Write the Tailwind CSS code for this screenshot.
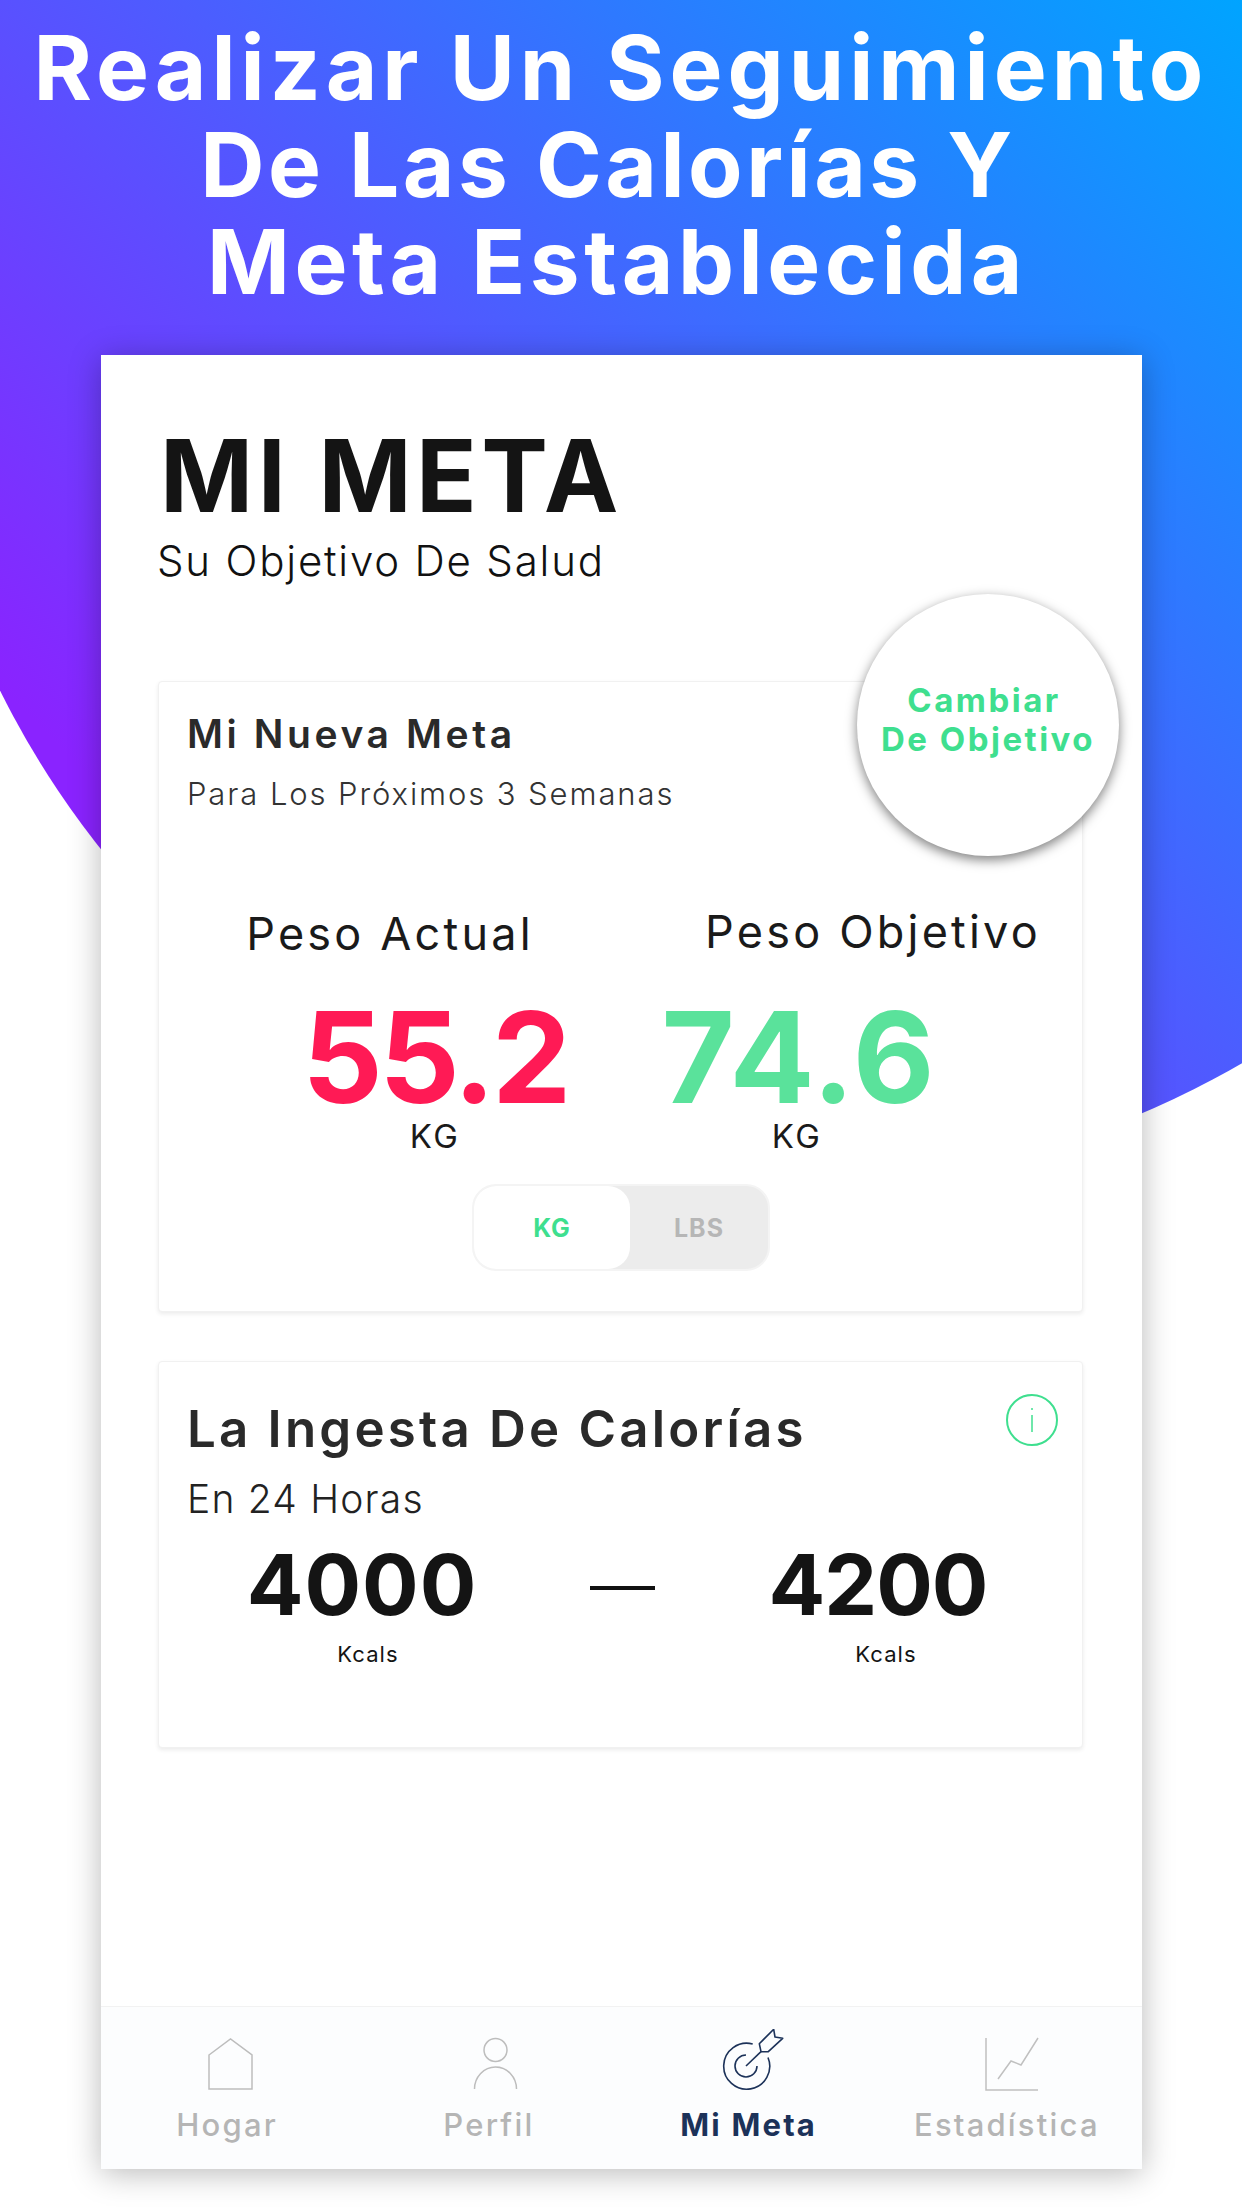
<!DOCTYPE html>
<html lang="es">
<head>
    <meta charset="UTF-8">
    <meta name="viewport" content="width=device-width, initial-scale=1.0">
    <title>Mi Meta</title>
    <script src="https://cdn.jsdelivr.net/npm/@tailwindcss/browser@4"></script>
</head>
<body class="bg-white font-['Inter',sans-serif]">
    <div class="relative w-[1242px] h-[2208px] overflow-hidden bg-white">
        <!-- Gradient disc behind the header and card -->
        <div class="absolute left-0 top-0 w-[1242px] h-[1200px] bg-[linear-gradient(225deg,#00a4ff_0%,#8a23ff_79%)] [clip-path:circle(887px_at_795px_297px)]"></div>

        <div class="relative flex flex-col h-full">
            <header class="h-[355px] pt-[19px] text-center text-white text-[89px] leading-[97px] font-bold">
                <h1 class="tracking-[5px]">Realizar Un Seguimiento</h1>
                <p class="pr-[26px] tracking-[3.5px]">De Las Calorías Y</p>
                <p class="pr-[8px] tracking-[4.5px]">Meta Establecida</p>
            </header>

            <main class="flex flex-col w-[1041px] h-[1814px] ml-[101px] bg-white shadow-[0_4px_30px_rgba(0,0,0,0.28)]">
                <div class="pt-[71px] pl-[57px] pr-[59px]">
                    <h2 class="ml-[2px] text-[100px] leading-[100px] font-bold text-[#141414] tracking-[4.5px]">MI META</h2>
                    <p class="mt-[10px] -ml-[1px] text-[42px] leading-[50px] font-light text-[#111] tracking-[1.8px]">Su Objetivo De Salud</p>

                    <!-- Goal card -->
                    <section class="relative mt-[95px] h-[631px] pt-[29px] pl-[28px] bg-white border border-[#f1f1f1] rounded-[4px] shadow-[0_2px_4px_rgba(0,0,0,0.08)]">
                        <h3 class="text-[39px] leading-[46px] font-semibold text-[#2a2a2a] tracking-[3.6px]">Mi Nueva Meta</h3>
                        <p class="mt-[18px] text-[31px] leading-[38px] font-light text-[#333] tracking-[1.9px]">Para Los Próximos 3 Semanas</p>

                        <button class="absolute -top-[88px] -right-[37px] z-10 flex flex-col items-center justify-center w-[262px] h-[262px] pb-[10px] rounded-full bg-white shadow-[0_4px_12px_rgba(0,0,0,0.5)] text-[33px] leading-[39px] font-bold text-[#3fdf8f] tracking-[2.5px]">
                            <span class="pr-[8px]">Cambiar</span>
                            <span>De Objetivo</span>
                        </button>

                        <div class="flex items-start mt-[94px] text-[45px] leading-[54px] text-[#1a1a1a] text-center tracking-[3.2px] whitespace-nowrap">
                            <p class="ml-[33px] w-[340px]">Peso Actual</p>
                            <p class="ml-[143px] w-[340px] -mt-[2px]">Peso Objetivo</p>
                        </div>

                        <div class="flex mt-[37px] text-center">
                            <div class="ml-[88px] w-[320px]">
                                <p class="text-[126px] leading-[118px] font-bold text-[#ff1a55] tracking-[-3.5px]">55.2</p>
                                <p class="text-[33px] leading-[40px] text-[#1a1a1a] tracking-[2.5px]">KG</p>
                            </div>
                            <div class="ml-[44px] w-[320px]">
                                <p class="text-[126px] leading-[118px] font-bold text-[#5ae29b] tracking-[2px]">74.6</p>
                                <p class="pr-[4px] text-[33px] leading-[40px] text-[#1a1a1a] tracking-[2.5px]">KG</p>
                            </div>
                        </div>

                        <div class="flex mt-[28px] ml-[285px] w-[298px] h-[87px] border-2 border-[#f4f4f4] rounded-[24px] bg-[#ececec] text-[25px] font-bold tracking-[1px]">
                            <div class="flex items-center justify-center w-[156px] h-full pt-[2px] rounded-[22px] bg-white text-[#3fdf8f]">KG</div>
                            <div class="flex items-center justify-center flex-1 pt-[2px] text-[#b6b6b6]">LBS</div>
                        </div>
                    </section>

                    <!-- Calorie intake card -->
                    <section class="relative mt-[49px] h-[387px] pt-[37px] pl-[28px] bg-white border border-[#f1f1f1] rounded-[4px] shadow-[0_2px_4px_rgba(0,0,0,0.08)]">
                        <svg class="absolute top-[32px] right-[24px]" width="52" height="52" viewBox="0 0 52 52" fill="none" stroke="#3fdf8f">
                            <circle cx="26" cy="26" r="25" stroke-width="2"/>
                            <path d="M26 21v17" stroke-width="1.5"/>
                            <path d="M26 14v2" stroke-width="1.5"/>
                        </svg>
                        <h3 class="text-[51px] leading-[60px] font-semibold text-[#2a2a2a] tracking-[3.2px]">La Ingesta De Calorías</h3>
                        <p class="mt-[17px] text-[39px] leading-[46px] font-light text-[#222] tracking-[1.2px]">En 24 Horas</p>
                        <div class="flex items-start mt-[18px] text-center text-[#141414]">
                            <div class="ml-[25px] w-[300px]">
                                <p class="text-[84px] leading-[90px] font-bold tracking-[1px]">4000</p>
                                <p class="mt-[10px] pl-[12px] text-[22px] leading-[28px] tracking-[1.1px]">Kcals</p>
                            </div>
                            <div class="ml-[78px] mt-[46px] w-[65px] h-[4px] bg-[#111]"></div>
                            <div class="ml-[73px] w-[300px]">
                                <p class="text-[84px] leading-[90px] font-bold tracking-[-1px]">4200</p>
                                <p class="mt-[10px] pl-[16px] text-[22px] leading-[28px] tracking-[1.1px]">Kcals</p>
                            </div>
                        </div>
                    </section>
                </div>

                <!-- Bottom tab bar -->
                <nav class="grid grid-cols-4 mt-auto h-[163px] pt-[22px] bg-[#fcfdfe] border-t border-[#f2f2f2] text-[31px] leading-[38px] text-center text-[#b5b5b5] tracking-[2.2px]">
                    <a class="flex flex-col items-center">
                        <svg width="80" height="64" viewBox="0 0 80 64" fill="none" stroke="#bdbdbd" stroke-width="1.5">
                            <path d="M18 26 39.5 10 61 26V60H18Z"/>
                        </svg>
                        <span class="mt-[13px] pr-[8px] font-medium">Hogar</span>
                    </a>
                    <a class="flex flex-col items-center">
                        <svg width="80" height="64" viewBox="0 0 80 64" fill="none" stroke="#bdbdbd" stroke-width="1.5">
                            <circle cx="44.5" cy="21" r="11.5"/>
                            <path d="M23.5 60a21 22 0 0 1 42 0"/>
                        </svg>
                        <span class="mt-[13px] pr-[5px] font-medium">Perfil</span>
                    </a>
                    <a class="flex flex-col items-center">
                        <svg width="80" height="64" viewBox="0 0 80 64" fill="none" stroke="#1c3259" stroke-width="1.6" stroke-linejoin="round">
                            <path d="M56 28.5A23 23 0 1 1 40.7 15"/>
                            <path d="M45 37A11 11 0 1 1 34 26"/>
                            <path d="M34 37 49 22.7"/>
                            <path d="M47.3 14.7 61.7 .3 63 8 70.7 9.3 56.3 22.7H49Z"/>
                        </svg>
                        <span class="mt-[13px] pr-[6px] font-bold text-[#1c3259]">Mi Meta</span>
                    </a>
                    <a class="flex flex-col items-center">
                        <svg width="80" height="64" viewBox="0 0 80 64" fill="none" stroke="#c0c0c0" stroke-width="1.5">
                            <path d="M14 9V61H66"/>
                            <path d="M26 50 39 32 49 36 66 9"/>
                        </svg>
                        <span class="mt-[13px] pr-[10px] font-medium">Estadística</span>
                    </a>
                </nav>
            </main>
        </div>
    </div>
</body>
</html>
